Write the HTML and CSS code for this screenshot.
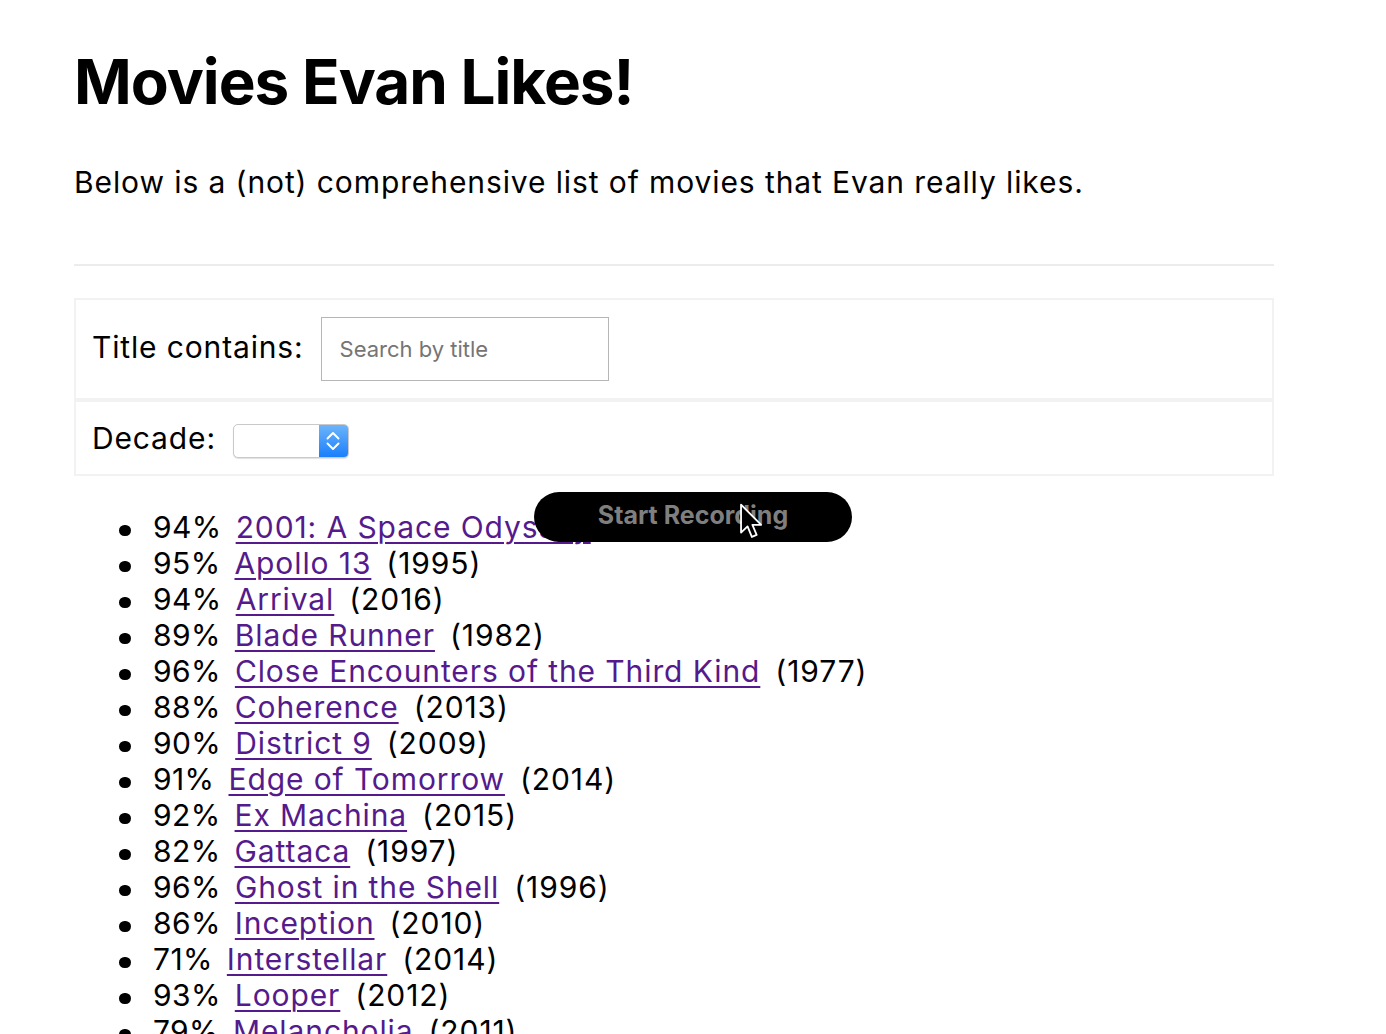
FILE: index.html
```html
<!DOCTYPE html>
<html lang="en">
<head>
<meta charset="utf-8">
<title>Movies Evan Likes!</title>
<link rel="stylesheet" href="styles.css">
</head>
<body>
<main class="page">
  <h1 class="title">Movies Evan Likes!</h1>
  <p class="intro">Below is a (not) comprehensive list of movies that Evan really likes.</p>
  <hr class="rule">
  <div class="filter filter-title">
    <label class="filter-label" for="q">Title contains:</label>
    <input class="search" id="q" type="text" placeholder="Search by title">
  </div>
  <div class="filter filter-decade">
    <span class="filter-label">Decade:</span>
    <div class="select">
      <span class="stepper">
        <svg width="14" height="20" viewBox="0 0 14 20" aria-hidden="true">
          <path d="M1.5 7.5 L7 2 L12.5 7.5" fill="none" stroke="#fff" stroke-width="1.9" stroke-linecap="round" stroke-linejoin="round"/>
          <path d="M1.5 12.5 L7 18 L12.5 12.5" fill="none" stroke="#fff" stroke-width="1.9" stroke-linecap="round" stroke-linejoin="round"/>
        </svg>
      </span>
    </div>
  </div>
  <ul class="movies">
    <li><span class="score">94%</span><a href="#">2001: A Space Odyssey</a><span class="year">(1968)</span></li>
    <li><span class="score">95%</span><a href="#">Apollo 13</a><span class="year">(1995)</span></li>
    <li><span class="score">94%</span><a href="#">Arrival</a><span class="year">(2016)</span></li>
    <li><span class="score">89%</span><a href="#">Blade Runner</a><span class="year">(1982)</span></li>
    <li><span class="score">96%</span><a href="#">Close Encounters of the Third Kind</a><span class="year">(1977)</span></li>
    <li><span class="score">88%</span><a href="#">Coherence</a><span class="year">(2013)</span></li>
    <li><span class="score">90%</span><a href="#">District 9</a><span class="year">(2009)</span></li>
    <li><span class="score">91%</span><a href="#">Edge of Tomorrow</a><span class="year">(2014)</span></li>
    <li><span class="score">92%</span><a href="#">Ex Machina</a><span class="year">(2015)</span></li>
    <li><span class="score">82%</span><a href="#">Gattaca</a><span class="year">(1997)</span></li>
    <li><span class="score">96%</span><a href="#">Ghost in the Shell</a><span class="year">(1996)</span></li>
    <li><span class="score">86%</span><a href="#">Inception</a><span class="year">(2010)</span></li>
    <li><span class="score">71%</span><a href="#">Interstellar</a><span class="year">(2014)</span></li>
    <li><span class="score">93%</span><a href="#">Looper</a><span class="year">(2012)</span></li>
    <li><span class="score">79%</span><a href="#">Melancholia</a><span class="year">(2011)</span></li>
    <li><span class="score">91%</span><a href="#">Minority Report</a><span class="year">(2002)</span></li>
  </ul>
</main>
<div class="recorder">
  <span class="recorder-text">Start Recording</span>
  <svg class="cursor" width="28" height="41" viewBox="0 0 24 36" aria-hidden="true">
    <path d="M1.5 1.5 L1.5 26 L7.2 20.6 L11 29.8 L15.2 28 L11.5 19.2 L19.2 19.2 Z" fill="#000" stroke="#fff" stroke-width="1.6" stroke-linejoin="round"/>
  </svg>
</div>
</body>
</html>
```
FILE: styles.css
```css
html, body {
  margin: 0;
  padding: 0;
  background: #fff;
}
body {
  font-family: Inter, "Noto Sans", "DejaVu Sans", sans-serif;
  color: #000;
  overflow: hidden;
  height: 1034px;
}
.page {
  width: 1200px;
  margin-left: 74px;
  padding-top: 44px;
}
.title {
  margin: 0;
  font-size: 62px;
  font-weight: 700;
  line-height: 76px;
  letter-spacing: -1px;
}
.intro {
  margin: 44px 0 0;
  font-size: 30px;
  line-height: 36px;
  letter-spacing: 0.9px;
}
.rule {
  margin: 64px 0 0;
  border: 0;
  height: 2px;
  background: #ececec;
}
.filter {
  display: flex;
  align-items: center;
  border: 2px solid #f2f2f2;
  padding: 0 16px;
}
.filter-title {
  margin-top: 32px;
  padding-top: 17px;
  padding-bottom: 17px;
}
.filter-decade {
  padding-top: 18px;
  padding-bottom: 13px;
}
.filter-label {
  font-size: 30px;
  line-height: 36px;
  letter-spacing: 0.85px;
  margin-right: 17px;
  margin-bottom: 5px;
}
.search {
  box-sizing: border-box;
  width: 288px;
  height: 64px;
  border: 1px solid #b6b6b6;
  border-radius: 0;
  padding: 0 18px;
  font-family: inherit;
  font-size: 22px;
  color: #000;
  outline: none;
}
.search::placeholder {
  color: #757575;
}
.select {
  box-sizing: border-box;
  width: 116px;
  height: 34px;
  border: 1px solid #c9c9c9;
  border-radius: 5px;
  background: #fff;
  box-shadow: 0 1px 1px rgba(0, 0, 0, 0.12);
  display: flex;
  justify-content: flex-end;
  overflow: hidden;
}
.stepper {
  width: 29px;
  height: 100%;
  background: linear-gradient(#6db4fb, #1a7ffb);
  display: flex;
  align-items: center;
  justify-content: center;
}
.movies {
  margin: 33px 0 0;
  padding-left: 79px;
  font-size: 30px;
  line-height: 36px;
  letter-spacing: 0.9px;
  list-style: none;
}
.movies li::before {
  content: "";
  display: inline-block;
  width: 11.5px;
  height: 11.5px;
  border-radius: 50%;
  background: #000;
  margin-left: -34px;
  margin-right: 22.5px;
  vertical-align: 2px;
}
.movies .score {
  letter-spacing: 0.4px;
}
.movies a {
  color: #551a8b;
  text-decoration: underline;
  text-decoration-thickness: 2px;
  text-underline-offset: 4px;
  margin: 0 15px 0 14px;
}
.recorder {
  position: absolute;
  left: 534px;
  top: 492px;
  width: 318px;
  height: 50px;
  border-radius: 25px;
  background: #000;
  display: flex;
  align-items: center;
  justify-content: center;
}
.recorder-text {
  font-family: Inter, "Noto Sans", sans-serif;
  font-weight: 700;
  font-size: 25px;
  color: #7f7f7f;
  margin-top: -4px;
}
.cursor {
  position: absolute;
  left: 205px;
  top: 11px;
}
```
